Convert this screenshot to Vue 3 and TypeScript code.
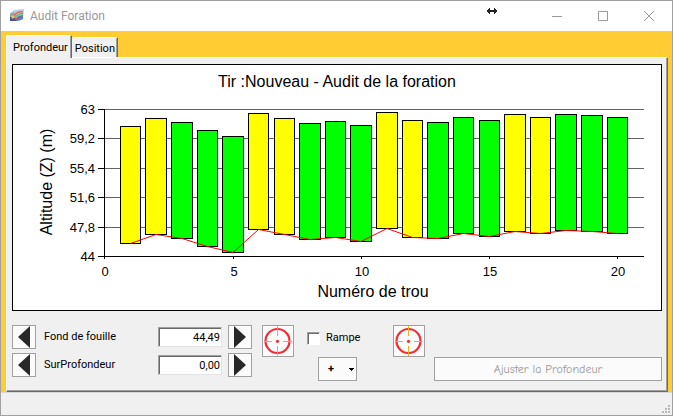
<script setup lang="ts">
import { ref } from 'vue'

interface Hole {
  x: number
  w: number
  top: number
  bottom: number
  ok: boolean
}

const hole = (x: number, w: number, top: number, bottom: number, ok: boolean): Hole => ({ x, w, top, bottom, ok })

const holes: Hole[] = [
  hole(107, 21, 61, 178, false),
  hole(132, 22, 53, 169, false),
  hole(158, 22, 57, 173, true),
  hole(184, 21, 65, 181, true),
  hole(209, 22, 71, 187, true),
  hole(235, 21, 48, 164, false),
  hole(261, 21, 53, 169, false),
  hole(286, 22, 58, 174, true),
  hole(312, 21, 56, 172, true),
  hole(337, 22, 60, 176, true),
  hole(363, 22, 47, 163, false),
  hole(389, 21, 55, 172, false),
  hole(414, 22, 57, 173, true),
  hole(440, 21, 52, 168, true),
  hole(466, 21, 55, 171, true),
  hole(491, 22, 49, 166, false),
  hole(517, 21, 52, 168, false),
  hole(542, 22, 49, 165, true),
  hole(568, 22, 50, 166, true),
  hole(594, 21, 52, 168, true),
]

const levels = [
  { y: 44, label: '63' },
  { y: 73, label: '59,2' },
  { y: 103, label: '55,4' },
  { y: 132, label: '51,6' },
  { y: 162, label: '47,8' },
  { y: 191, label: '44' },
]

const marks = [
  { x: 91, label: '0' },
  { x: 220, label: '5' },
  { x: 348, label: '10' },
  { x: 476, label: '15' },
  { x: 604, label: '20' },
]

const floorLine = holes.map((h) => `${h.x + h.w / 2},${h.bottom + 0.5}`).join(' ')

const tab = ref('Profondeur')
const bottom = ref('44,49')
const extra = ref('0,00')
const ramp = ref(false)
const sign = ref('+')
</script>

<template>
  <div class="window">
    <header class="titlebar">
      <svg class="app-icon" width="16" height="16" viewBox="0 0 16 16" aria-hidden="true">
        <path d="M1 5 5 2 15 1 14 11 9 13 1 13Z" fill="#b9cde4" />
        <path d="M1 6 5 4 6 7 4 9 1 9Z" fill="#9aa3a8" />
        <path d="M1 9 5 8 8 13 1 13Z" fill="#4a4f9c" />
        <path d="M2 8 6 7 7 9 3 11Z" fill="#d8c860" />
        <path d="M7 12 9 8 14 7V11L9 13Z" fill="#4f7fd8" />
        <path d="M5 8Q8 3 14 4" fill="none" stroke="#e8655c" stroke-width="1.5" />
        <path d="M6 10Q9 5 14 6" fill="none" stroke="#58c070" stroke-width="1.5" />
        <path d="M6 12Q9 9 12 9" fill="none" stroke="#d84848" stroke-width="1.5" />
      </svg>
      <h1>Audit Foration</h1>
      <button class="caption" aria-label="Réduire">
        <svg width="10" height="10" viewBox="0 0 10 10"><path d="M0 5.5H10" /></svg>
      </button>
      <button class="caption" aria-label="Agrandir">
        <svg width="10" height="10" viewBox="0 0 10 10"><path d="M.5.5H9.5V9.5H.5Z" /></svg>
      </button>
      <button class="caption" aria-label="Fermer">
        <svg width="10" height="10" viewBox="0 0 10 10"><path d="M0 0 10 10M10 0 0 10" /></svg>
      </button>
      <svg class="pointer" width="10" height="6" viewBox="0 0 10 6" aria-hidden="true">
        <path d="M0 2H1V1H2V0H3V2H7V0H8V1H9V2H10V4H9V5H8V6H7V4H3V6H2V5H1V4H0Z" fill="#222" />
      </svg>
    </header>

    <main class="body">
      <nav class="tabs" role="tablist">
        <button
          v-for="t in ['Profondeur', 'Position']"
          :key="t"
          role="tab"
          class="tab"
          :class="{ active: tab === t }"
          :aria-selected="tab === t"
          @click="tab = t"
        >{{ t }}</button>
      </nav>

      <section class="panel">
        <div class="chart">
          <svg viewBox="0 0 648 245" role="img" aria-label="Audit de la foration">
            <text class="big" x="324" y="22" text-anchor="middle">Tir :Nouveau - Audit de la foration</text>
            <g shape-rendering="crispEdges">
              <rect v-for="l in levels" :key="l.label" x="91" :y="l.y" width="540" height="1" fill="#646464" />
              <rect v-for="l in levels" :key="l.label" x="85" :y="l.y" width="6" height="1" />
              <rect x="91" y="44" width="1" height="148" />
              <rect x="91" y="191" width="540" height="1" />
              <rect v-for="m in marks" :key="m.label" :x="m.x" y="191" width="1" height="3" />
              <rect
                v-for="(h, i) in holes"
                :key="i"
                :x="h.x + 0.5"
                :y="h.top + 0.5"
                :width="h.w - 1"
                :height="h.bottom - h.top"
                :fill="h.ok ? '#00ff00' : '#ffff00'"
                stroke="#000"
              />
            </g>
            <polyline :points="floorLine" fill="none" stroke="#ff0000" />
            <text v-for="l in levels" :key="l.label" class="small" x="82" :y="l.y + 5" text-anchor="end">{{ l.label }}</text>
            <text v-for="m in marks" :key="m.label" class="small" :x="m.x + 1" y="211" text-anchor="middle">{{ m.label }}</text>
            <text class="big" x="360" y="232" text-anchor="middle">Numéro de trou</text>
            <text class="big" transform="translate(39 117) rotate(-90)" text-anchor="middle">Altitude (Z) (m)</text>
          </svg>
        </div>

        <div class="controls">
          <div class="fields">
            <button class="flat" aria-label="Diminuer le fond de fouille">
              <svg width="22" height="22" viewBox="0 0 22 22"><path d="M5 11 17 0V22Z" fill="#282828" /></svg>
            </button>
            <label for="fond">Fond de fouille</label>
            <input id="fond" v-model="bottom" type="text" />
            <button class="flat" aria-label="Augmenter le fond de fouille">
              <svg width="22" height="22" viewBox="0 0 22 22"><path d="M17 11 5 0V22Z" fill="#282828" /></svg>
            </button>
            <button class="flat" aria-label="Diminuer la surprofondeur">
              <svg width="22" height="22" viewBox="0 0 22 22"><path d="M5 11 17 0V22Z" fill="#282828" /></svg>
            </button>
            <label for="sur">SurProfondeur</label>
            <input id="sur" v-model="extra" type="text" />
            <button class="flat" aria-label="Augmenter la surprofondeur">
              <svg width="22" height="22" viewBox="0 0 22 22"><path d="M17 11 5 0V22Z" fill="#282828" /></svg>
            </button>
          </div>

          <button class="flat target" aria-label="Cibler le fond">
            <svg width="30" height="30" viewBox="0 0 30 30">
              <circle cx="14.5" cy="15" r="12" fill="none" stroke="#f22c32" stroke-width="2.2" />
              <path d="M14.5 0V10M14.5 20V30M1 15.5H9M20 15.5H29" stroke="#f2b01e" />
              <circle cx="14.5" cy="15.3" r="1.6" fill="#f22c32" />
            </svg>
          </button>

          <div class="ramp">
            <label class="check"><input v-model="ramp" type="checkbox" />Rampe</label>
            <div class="sign">
              <select v-model="sign" aria-label="Signe">
                <option>+</option>
                <option>-</option>
              </select>
              <svg width="5" height="3" viewBox="0 0 5 3" aria-hidden="true"><path d="M0 0H5V1H4V2H3V3H2V2H1V1H0Z" /></svg>
            </div>
          </div>

          <button class="flat target" aria-label="Cibler la rampe">
            <svg width="30" height="30" viewBox="0 0 30 30">
              <circle cx="14.5" cy="15" r="12" fill="none" stroke="#f22c32" stroke-width="2.2" />
              <path d="M14.5 0V10M14.5 20V30M1 15.5H9M20 15.5H29" stroke="#f2b01e" />
              <circle cx="14.5" cy="15.3" r="1.6" fill="#f22c32" />
            </svg>
          </button>

          <button class="flat adjust" disabled>Ajuster la Profondeur</button>
        </div>
      </section>
    </main>

    <footer class="status">
      <svg width="8" height="8" viewBox="0 0 8 8" aria-hidden="true">
        <path d="M6 0H8V2H6ZM3 3H5V5H3ZM6 3H8V5H6ZM0 6H2V8H0ZM3 6H5V8H3ZM6 6H8V8H6Z" fill="#b8b8b8" />
      </svg>
    </footer>
  </div>
</template>

<style>
body {
  margin: 0;
}
</style>

<style scoped>
* {
  box-sizing: border-box;
}
.window {
  display: flex;
  flex-direction: column;
  min-height: 100vh;
  border: 1px solid #a0a0a0;
  background: #f0f0f0;
  color: #000;
  font: 11px/16px Roboto, "Liberation Sans", sans-serif;
}
button,
input,
select {
  margin: 0;
  padding: 0;
  border-radius: 0;
  color: inherit;
  font: inherit;
}
svg {
  display: block;
}
.titlebar {
  position: relative;
  display: flex;
  align-items: center;
  height: 30px;
  padding-left: 8px;
  background: #fff;
}
h1 {
  flex: 1;
  margin: 0 0 0 5px;
  color: #999;
  font: 12px/16px Roboto, sans-serif;
}
.caption {
  display: grid;
  place-items: center;
  width: 46px;
  height: 30px;
  border: 0;
  background: none;
}
.caption path {
  fill: none;
  stroke: #999;
}
.pointer {
  position: absolute;
  top: 7px;
  left: 486px;
}
.body {
  padding: 4px 4px 0 5px;
  background: #ffcc33;
}
.tabs {
  display: flex;
  align-items: flex-end;
}
.tab {
  height: 20px;
  padding: 2px 2px 0 3px;
  border: solid #fff;
  border-width: 1px 0 0;
  border-right: 1px solid #696969;
  border-radius: 2px 0 0 0;
  background: #f0f0f0;
  box-shadow: inset -1px 0 #a0a0a0;
}
.tab.active {
  z-index: 1;
  height: 23px;
  margin-bottom: -1px;
  padding: 2px 3px 0 6px;
  border-left: 1px solid #fff;
}
.panel {
  padding: 6px 5px 10px 5px;
  border: 1px solid #fff;
  border-right: 1px solid #696969;
  border-bottom: 1px solid #696969;
  background: #f0f0f0;
  box-shadow: inset -1px -1px #a0a0a0;
}
.chart {
  border: 1px solid #000;
  background: #fff;
}
.chart svg {
  width: 100%;
  height: auto;
}
.big {
  font: 16px "Liberation Sans", sans-serif;
}
.small {
  font: 13px "Liberation Sans", sans-serif;
}
.controls {
  display: flex;
  min-height: 56px;
  margin-top: 14px;
}
.fields {
  display: grid;
  grid-template-columns: 32px 114px 70px 24px;
  grid-auto-rows: 24px;
  align-items: center;
  align-content: start;
  row-gap: 4px;
}
.flat {
  display: grid;
  place-items: center;
  height: 24px;
  border: 1px solid #a0a0a0;
  background: #fbfbfb;
}
.fields .flat {
  width: 24px;
}
.fields input {
  width: 64px;
  height: 20px;
  padding-right: 1px;
  border: 1px solid #a0a0a0;
  border-right-color: #e3e3e3;
  border-bottom-color: #e3e3e3;
  background: #fff;
  box-shadow: inset 1px 1px #696969;
  text-align: right;
}
.target {
  width: 32px;
  height: 32px;
  margin-left: 10px;
}
.ramp {
  display: flex;
  flex-direction: column;
  justify-content: space-between;
  width: 86px;
  margin: 0 0 0 13px;
}
.ramp + .target {
  margin-left: 0;
}
.check {
  display: flex;
  align-items: center;
  gap: 6px;
  padding-top: 5px;
}
.check input {
  appearance: none;
  width: 13px;
  height: 13px;
  border: 1px solid #a0a0a0;
  border-right-color: #fff;
  border-bottom-color: #fff;
  background: #fff;
  box-shadow: inset 1px 1px #696969;
}
.check input:checked {
  background: #222;
}
.sign {
  display: grid;
  align-items: center;
  width: 39px;
  margin-left: 11px;
}
.sign select {
  grid-area: 1 / 1;
  appearance: none;
  height: 24px;
  padding-left: 9px;
  border: 1px solid #a0a0a0;
  background: #fbfbfb;
  font-weight: bold;
}
.sign svg {
  grid-area: 1 / 1;
  justify-self: end;
  margin-right: 3px;
  pointer-events: none;
}
.adjust {
  flex: 1;
  align-self: flex-end;
  margin-left: 9px;
  color: #999;
  font: 12px/16px "Comic Neue", Lato, sans-serif;
}
.status {
  display: flex;
  flex: 1;
  align-items: flex-end;
  justify-content: flex-end;
  min-height: 23px;
  padding: 2px;
  border-top: 1px solid #d7d7d7;
}
</style>
